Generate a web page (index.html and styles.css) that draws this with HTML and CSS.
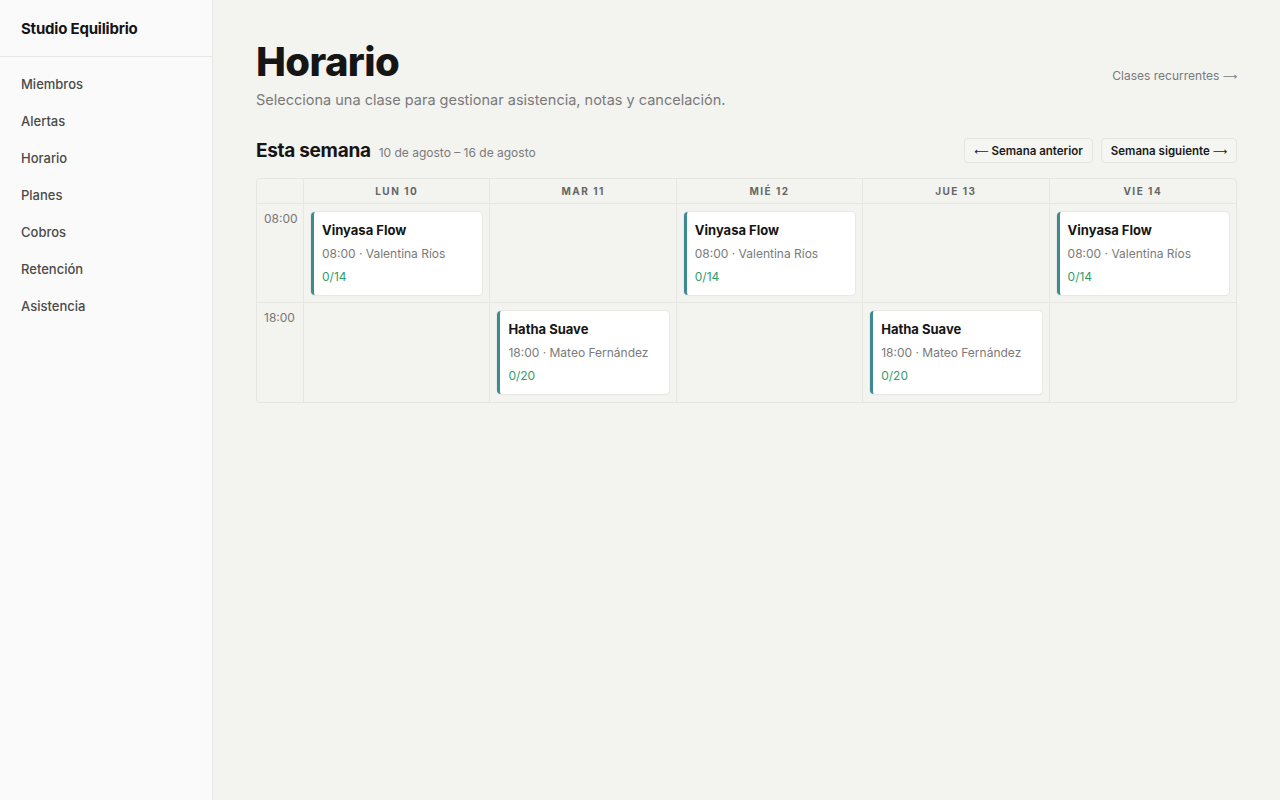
FILE: index.html
```html
<!DOCTYPE html>
<html lang="es">
<head>
<meta charset="utf-8">
<title>Horario · Studio Equilibrio</title>
<link rel="stylesheet" href="styles.css">
</head>
<body>
<div class="app">
  <aside class="sidebar">
    <div class="brand">Studio Equilibrio</div>
    <nav class="nav">
      <a class="nav-item">Miembros</a>
      <a class="nav-item">Alertas</a>
      <a class="nav-item">Horario</a>
      <a class="nav-item">Planes</a>
      <a class="nav-item">Cobros</a>
      <a class="nav-item">Retención</a>
      <a class="nav-item">Asistencia</a>
    </nav>
  </aside>
  <main class="main">
    <header class="page-head">
      <div>
        <h1 class="title">Horario</h1>
        <p class="subtitle">Selecciona una clase para gestionar asistencia, notas y cancelación.</p>
      </div>
      <a class="link">Clases recurrentes <span class="arrow">⟶</span></a>
    </header>
    <section class="week-head">
      <div class="week-title"><h2>Esta semana</h2><span class="range">10 de agosto – 16 de agosto</span></div>
      <div class="week-nav">
        <button class="btn"><span class="arrow">⟵</span> Semana anterior</button>
        <button class="btn">Semana siguiente <span class="arrow">⟶</span></button>
      </div>
    </section>
    <div class="grid">
      <div class="cell head"></div>
      <div class="cell head">LUN 10</div>
      <div class="cell head">MAR 11</div>
      <div class="cell head">MIÉ 12</div>
      <div class="cell head">JUE 13</div>
      <div class="cell head">VIE 14</div>

      <div class="cell time">08:00</div>
      <div class="cell slot"><div class="card"><div class="c-name">Vinyasa Flow</div><div class="c-meta">08:00 · Valentina Ríos</div><div class="c-cap">0/14</div></div></div>
      <div class="cell slot"></div>
      <div class="cell slot"><div class="card"><div class="c-name">Vinyasa Flow</div><div class="c-meta">08:00 · Valentina Ríos</div><div class="c-cap">0/14</div></div></div>
      <div class="cell slot"></div>
      <div class="cell slot"><div class="card"><div class="c-name">Vinyasa Flow</div><div class="c-meta">08:00 · Valentina Ríos</div><div class="c-cap">0/14</div></div></div>

      <div class="cell time">18:00</div>
      <div class="cell slot"></div>
      <div class="cell slot"><div class="card"><div class="c-name">Hatha Suave</div><div class="c-meta">18:00 · Mateo Fernández</div><div class="c-cap">0/20</div></div></div>
      <div class="cell slot"></div>
      <div class="cell slot"><div class="card"><div class="c-name">Hatha Suave</div><div class="c-meta">18:00 · Mateo Fernández</div><div class="c-cap">0/20</div></div></div>
      <div class="cell slot"></div>
    </div>
  </main>
</div>
</body>
</html>
```
FILE: styles.css
```css
* { box-sizing: border-box; }
html, body { margin: 0; height: 100%; }
body {
  font-family: "Inter", "Liberation Sans", sans-serif;
  color: #151515;
  background: #f3f3f0;
}
.app { display: flex; min-height: 100vh; }
.sidebar {
  width: 213px;
  flex: none;
  background: #fafafa;
  border-right: 1px solid #e8e8e5;
}
.brand {
  height: 57px;
  padding: 0 21px;
  display: flex;
  align-items: center;
  font-size: 15px;
  font-weight: 700;
  letter-spacing: -0.2px;
  border-bottom: 1px solid #e6e6e3;
}
.nav { display: flex; flex-direction: column; padding-top: 8px; }
.nav-item {
  height: 37px;
  display: flex;
  align-items: center;
  padding: 0 21px;
  font-size: 13px;
  font-weight: 500;
  color: #4a4a4a;
}
.main { flex: 1; padding: 40px 43px; }
.page-head { display: flex; justify-content: space-between; align-items: flex-start; }
.title { margin: 0; font-size: 40px; font-weight: 800; letter-spacing: -0.6px; line-height: 44px; }
.subtitle { margin: 7px 0 0; font-size: 14.5px; color: #7a7a7a; }
.link { margin-top: 28px; font-size: 12px; color: #7a7a7a; }
.arrow { font-family: "DejaVu Sans", sans-serif; font-weight: 400; font-size: 10px; }
.week-head { display: flex; justify-content: space-between; align-items: center; margin-top: 30px; }
.week-title { display: flex; align-items: baseline; gap: 8px; }
.week-title h2 { margin: 0; font-size: 19px; font-weight: 700; letter-spacing: -0.3px; }
.range { font-size: 12px; color: #7a7a7a; }
.week-nav { display: flex; gap: 8px; }
.btn {
  font-family: inherit;
  font-size: 11.5px;
  font-weight: 600;
  color: #1a1a1a;
  background: #f5f5f2;
  border: 1px solid #e3e3df;
  border-radius: 4px;
  height: 25px;
  padding: 0 9px;
}
.grid {
  margin-top: 15px;
  display: grid;
  grid-template-columns: 47px repeat(5, 1fr);
  grid-template-rows: 25px 99px 99px;
  border: 1px solid #e6e6e2;
  border-radius: 4px;
}
.cell { border-right: 1px solid #e6e6e2; border-bottom: 1px solid #e6e6e2; }
.cell:nth-child(6n) { border-right: none; }
.cell:nth-last-child(-n+6) { border-bottom: none; }
.head {
  display: flex; align-items: center; justify-content: center;
  font-size: 10px; font-weight: 700; letter-spacing: 1.5px; color: #666;
}
.time { padding: 7px 0 0 7px; font-size: 12px; color: #777; }
.slot { padding: 8px 7px; }
.card {
  height: 83px;
  background: #fff;
  border-radius: 4px;
  border-left: 3px solid #3e8a94;
  box-shadow: 0 0 0 1px #e8e8e4, 0 1px 2px rgba(0,0,0,0.06);
  padding: 10px 8px 0;
}
.c-name { font-size: 13px; font-weight: 700; line-height: 16px; }
.c-meta { margin-top: 8px; font-size: 12px; color: #7a7a7a; line-height: 15px; }
.c-cap { margin-top: 8px; font-size: 12px; color: #2f9e6b; line-height: 15px; }
```
